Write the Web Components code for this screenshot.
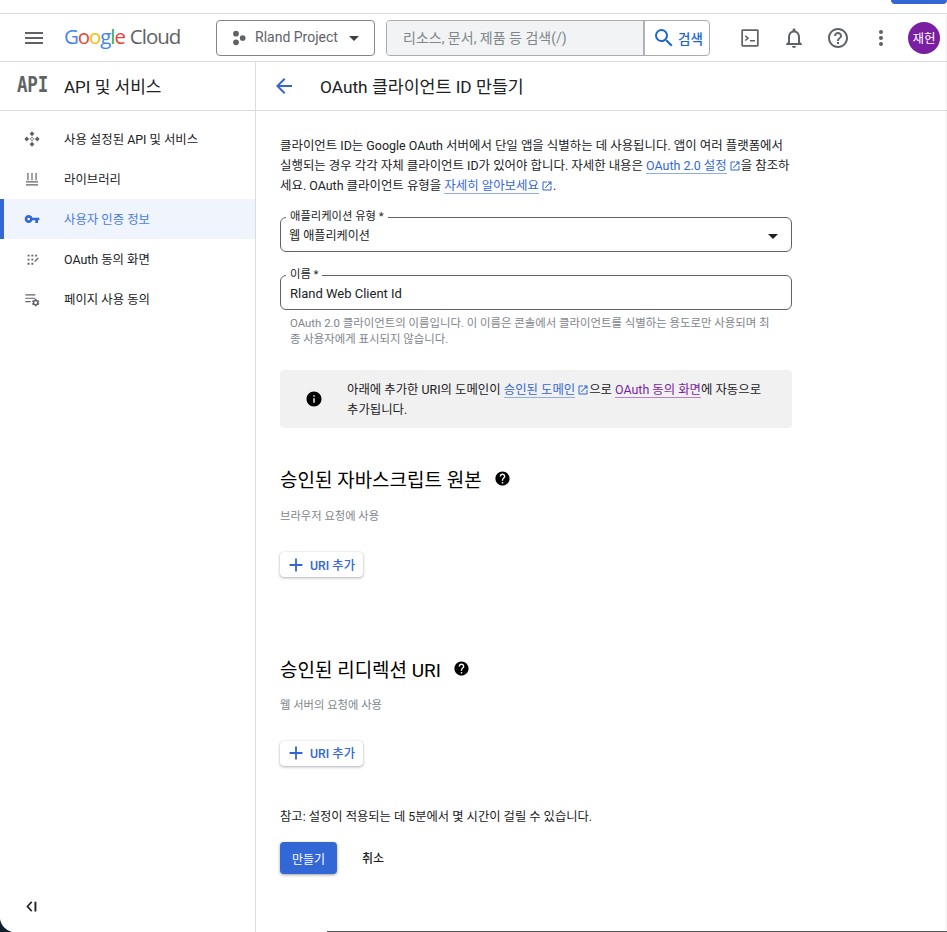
<!DOCTYPE html>
<html lang="ko">
<head>
<meta charset="utf-8">
<title>OAuth 클라이언트 ID 만들기</title>
<style>
  html, body { margin: 0; height: 100%; background: #fff; }
  body {
    font-family: Roboto, "Noto Sans CJK KR", sans-serif;
    color: #202124;
    overflow: hidden;
  }
</style>
</head>
<body>
<gc-console></gc-console>

<script>
const ICONS = {
  menu: `<path d="M3 18h18v-2H3v2zm0-5h18v-2H3v2zm0-7v2h18V6H3z"/>`,
  back: `<path d="M20 11H7.83l5.59-5.59L12 4l-8 8 8 8 1.41-1.41L7.83 13H20v-2z"/>`,
  search: `<path d="M15.5 14h-.79l-.28-.27A6.471 6.471 0 0 0 16 9.5 6.5 6.5 0 1 0 9.5 16c1.61 0 3.09-.59 4.23-1.57l.27.28v.79l5 4.99L20.49 19l-4.99-5zm-6 0C7.01 14 5 11.99 5 9.5S7.01 5 9.5 5 14 7.01 14 9.5 11.99 14 9.5 14z"/>`,
  bell: `<path d="M12 22c1.1 0 2-.9 2-2h-4c0 1.1.89 2 2 2zm6-6v-5c0-3.07-1.64-5.64-4.5-6.32V4c0-.83-.67-1.5-1.5-1.5s-1.5.67-1.5 1.5v.68C7.63 5.36 6 7.92 6 11v5l-2 2v1h16v-1l-2-2zm-2 1H8v-6c0-2.48 1.51-4.5 4-4.5s4 2.02 4 4.5v6z"/>`,
  helpOutline: `<path d="M11 18h2v-2h-2v2zm1-16C6.48 2 2 6.48 2 12s4.48 10 10 10 10-4.48 10-10S17.52 2 12 2zm0 18c-4.41 0-8-3.59-8-8s3.59-8 8-8 8 3.59 8 8-3.59 8-8 8zm0-14c-2.21 0-4 1.79-4 4h2c0-1.1.9-2 2-2s2 .9 2 2c0 2-3 1.75-3 5h2c0-2.25 3-2.5 3-5 0-2.21-1.79-4-4-4z"/>`,
  help: `<path d="M12 2C6.48 2 2 6.48 2 12s4.48 10 10 10 10-4.48 10-10S17.52 2 12 2zm1 17h-2v-2h2v2zm2.07-7.75l-.9.92C13.45 12.9 13 13.5 13 15h-2v-.5c0-1.1.45-2.1 1.17-2.83l1.24-1.26c.37-.36.59-.86.59-1.41 0-1.1-.9-2-2-2s-2 .9-2 2H8c0-2.21 1.79-4 4-4s4 1.79 4 4c0 .88-.36 1.68-.93 2.25z"/>`,
  info: `<path d="M12 2C6.48 2 2 6.48 2 12s4.48 10 10 10 10-4.48 10-10S17.52 2 12 2zm1 15h-2v-6h2v6zm0-8h-2V7h2v2z"/>`,
  more: `<path d="M12 8c1.1 0 2-.9 2-2s-.9-2-2-2-2 .9-2 2 .9 2 2 2zm0 2c-1.1 0-2 .9-2 2s.9 2 2 2 2-.9 2-2-.9-2-2-2zm0 6c-1.1 0-2 .9-2 2s.9 2 2 2 2-.9 2-2-.9-2-2-2z"/>`,
  key: `<path d="M12.65 10C11.83 7.67 9.61 6 7 6c-3.31 0-6 2.69-6 6s2.69 6 6 6c2.61 0 4.83-1.67 5.65-4H17v4h4v-4h2v-4H12.65zM7 14c-1.1 0-2-.9-2-2s.9-2 2-2 2 .9 2 2-.9 2-2 2z"/>`,
  open: `<path d="M19 19H5V5h7V3H5c-1.11 0-2 .9-2 2v14c0 1.1.89 2 2 2h14c1.1 0 2-.9 2-2v-7h-2v7zM14 3v2h3.59l-9.83 9.83 1.41 1.41L19 6.41V10h2V3h-7z"/>`,
  add: `<path d="M19 13h-6v6h-2v-6H5v-2h6V5h2v6h6v2z"/>`,
  terminal: `<path d="M4 2.5h16A1.5 1.5 0 0 1 21.5 4v16a1.5 1.5 0 0 1-1.5 1.5H4A1.5 1.5 0 0 1 2.5 20V4A1.5 1.5 0 0 1 4 2.5zm.4 1.9v15.2h15.2V4.4H4.4zM7.4 9l3.8 3.2-3.8 3.2-1.1-1.3 2.3-1.9-2.3-1.9L7.4 9zm4.6 5.1h5.5v1.6H12v-1.6z"/>`,
  project: `<circle cx="9" cy="5.5" r="4.3"/><circle cx="19" cy="12" r="4.3"/><circle cx="9" cy="18.5" r="4.3"/>`,
  apis: `<path d="M12 .5l3.6 3.6L12 7.7 8.4 4.1 12 .5zM4.1 8.4L7.7 12l-3.6 3.6L.5 12l3.6-3.6zm15.8 0L23.5 12l-3.6 3.6-3.6-3.6 3.6-3.6zM12 16.3l3.6 3.6-3.6 3.6-3.6-3.6 3.6-3.6z"/><circle cx="12" cy="9.8" r="1.2"/><circle cx="9.8" cy="12" r="1.2"/><circle cx="14.2" cy="12" r="1.2"/><circle cx="12" cy="14.2" r="1.2"/>`,
  library: `<path d="M3 20h18v1.8H3V20zm0-4.5h18v1.8H3v-1.8zM5 3h1.8v11H5V3zm6.100 0h1.800v11h-1.800V3zM17.200 3H19v11h-1.800V3z"/>`,
  consent: `<path d="M3 3h3.5v3.5H3V3zm7 0h3.5v3.5H10V3zm7 0h3.5v3.5H17V3zM3 10.5h3.5V14H3v-3.5zm7 0h3.5V14H10v-3.5zM3 18h3.5v3.5H3V18zm7 0h3.5v3.5H10V18zm6-3.5L22 8.5l1.5 1.5-6 6-2.3.8.8-2.3z"/>`,
  usage: `<path d="M2 5h15v1.7H2V5zm0 5h15v1.7H2V10zm0 5h8v1.7H2V15z"/><g transform="translate(10.5 10.5) scale(.58)"><path d="M19.14 12.94c.04-.3.06-.61.06-.94 0-.32-.02-.64-.07-.94l2.03-1.58a.49.49 0 0 0 .12-.61l-1.92-3.32a.488.488 0 0 0-.59-.22l-2.39.96c-.5-.38-1.03-.7-1.62-.94l-.36-2.54a.484.484 0 0 0-.48-.41h-3.84c-.24 0-.43.17-.47.41l-.36 2.54c-.59.24-1.13.57-1.62.94l-2.39-.96c-.22-.08-.47 0-.59.22L2.74 8.87c-.12.21-.08.47.12.61l2.03 1.58c-.05.3-.09.63-.09.94s.02.64.07.94l-2.03 1.58a.49.49 0 0 0-.12.61l1.92 3.32c.12.22.37.29.59.22l2.39-.96c.5.38 1.03.7 1.62.94l.36 2.54c.05.24.24.41.48.41h3.84c.24 0 .44-.17.47-.41l.36-2.54c.59-.24 1.13-.56 1.62-.94l2.39.96c.22.08.47 0 .59-.22l1.92-3.32c.12-.22.07-.47-.12-.61l-2.01-1.58zM12 15.6c-1.98 0-3.6-1.62-3.6-3.6s1.62-3.6 3.6-3.6 3.6 1.62 3.6 3.6-1.62 3.6-3.6 3.6z"/></g>`,
  collapse: `<path d="M13.5 4.5L6.5 12l7 7.5-2.2 2L2.5 12l8.8-9.5 2.2 2zM17.5 3H21v18h-3.5V3z"/>`,
  caret: `<path d="M7 10l5 5 5-5z"/>`
};

class GcIcon extends HTMLElement {
  connectedCallback() {
    const size = this.getAttribute("size") || 24;
    this.attachShadow({ mode: "open" }).innerHTML = `
      <style>
        :host { display: inline-flex; flex: none; width: ${size}px; height: ${size}px; color: inherit; }
        svg { display: block; width: 100%; height: 100%; fill: currentColor; }
      </style>
      <svg viewBox="0 0 24 24">${ICONS[this.getAttribute("name")]}</svg>`;
  }
}
customElements.define("gc-icon", GcIcon);

class GcLink extends HTMLElement {
  connectedCallback() {
    const external = this.hasAttribute("external");
    this.attachShadow({ mode: "open" }).innerHTML = `
      <style>
        :host { display: inline; color: var(--link, #3367d6); }
        .t { border-bottom: 1px solid var(--line, #93ade8); }
        gc-icon { vertical-align: -2px; margin-left: 2px; }
      </style>
      <span class="t"><slot></slot></span>${external ? `<gc-icon name="open" size="12"></gc-icon>` : ""}`;
  }
}
customElements.define("gc-link", GcLink);

class GcTopbar extends HTMLElement {
  connectedCallback() {
    this.attachShadow({ mode: "open" }).innerHTML = `
      <style>
        :host { display: flex; flex-direction: column; flex: none; }
        .strip { height: 13px; display: flex; justify-content: flex-end; }
        .tab { width: 56px; height: 3.5px; background: #3367d6; border-radius: 0 0 4px 4px; }
        .bar {
          height: 47px; display: flex; align-items: center;
          border-top: 1px solid #dadce0; border-bottom: 1px solid #dadce0;
          color: #5f6368;
        }
        .menu { margin-left: 22px; }
        .logo {
          margin-left: 18px; font: 400 20.5px/1 "Open Sans", sans-serif;
          letter-spacing: -1.1px; display: flex; width: 152px; white-space: nowrap; padding-bottom: 2px;
        }
        .logo .cloud { margin-left: 5px; color: #5f6368; letter-spacing: -1px; }
        .b { color: #4285f4; } .r { color: #ea4335; } .y { color: #fbbc04; } .g { color: #34a853; }
        .project {
          box-sizing: border-box; width: 159px; height: 36px; border: 1px solid #80868b; border-radius: 4px;
          display: flex; align-items: center; padding-left: 13px; font-size: 14px; color: #5f6368;
        }
        .project span { margin-left: 9px; margin-right: 4px; white-space: nowrap; padding-bottom: 2px; }
        .project gc-icon:last-child { color: #3c4043; }
        .search {
          box-sizing: border-box; width: 324px; height: 36px; margin-left: 11px;
          border: 1px solid #a8acb1; border-radius: 4px; display: flex; overflow: hidden;
        }
        .field {
          flex: 1; background: #f1f3f4; border-right: 2px solid #b0b3b8;
          display: flex; align-items: center; padding: 0 0 2px 16px;
          font-size: 14px; color: #80868b; white-space: nowrap;
        }
        .go {
          width: 64px; display: flex; align-items: center; justify-content: center; gap: 2px; padding-left: 1px; box-sizing: border-box;
          color: #1a67d2; font-size: 13.5px; font-weight: 500; white-space: nowrap;
        }
        .tools { display: flex; align-items: center; margin-left: 29px; }
        .avatar {
          width: 32px; height: 32px; border-radius: 50%; background: #7b1fa2; color: #fff;
          font-size: 12.5px; display: flex; align-items: center; justify-content: center; margin-left: 15px;
          white-space: nowrap;
        }
      </style>
      <div class="strip"><div class="tab"></div></div>
      <div class="bar">
        <gc-icon class="menu" name="menu" size="24"></gc-icon>
        <div class="logo"><span><span class="b">G</span><span class="r">o</span><span class="y">o</span><span class="b">g</span><span class="g">l</span><span class="r">e</span></span><span class="cloud">Cloud</span></div>
        <div class="project">
          <gc-icon name="project" size="16"></gc-icon>
          <span>Rland Project</span>
          <gc-icon name="caret" size="24"></gc-icon>
        </div>
        <div class="search">
          <div class="field">리소스, 문서, 제품 등 검색(/)</div>
          <div class="go"><gc-icon name="search" size="24"></gc-icon>검색</div>
        </div>
        <div class="tools">
          <gc-icon name="terminal" size="22"></gc-icon>
          <gc-icon name="bell" size="24" style="margin-left:21px"></gc-icon>
          <gc-icon name="helpOutline" size="24" style="margin-left:20px"></gc-icon>
          <gc-icon name="more" size="24" style="margin-left:19px"></gc-icon>
          <div class="avatar">재헌</div>
        </div>
      </div>`;
  }
}
customElements.define("gc-topbar", GcTopbar);

class GcNavItem extends HTMLElement {
  connectedCallback() {
    const active = this.hasAttribute("active");
    const size = this.getAttribute("size") || 16;
    this.attachShadow({ mode: "open" }).innerHTML = `
      <style>
        :host {
          display: flex; align-items: center; height: 40px; box-sizing: border-box;
          padding-left: ${active ? 20 : 24}px; font-size: 12.4px; white-space: nowrap;
          ${active ? "border-left: 4px solid #3367d6; background: #eff4fd; color: #4a7de0;" : "color: #202124;"}
        }
        gc-icon { color: ${active ? "#3367d6" : "#5f6368"}; margin: 0 ${24 + (16 - size) / 2}px 0 ${(16 - size) / 2}px; }
        span { padding-bottom: 1px; }
      </style>
      <gc-icon name="${this.getAttribute("icon")}" size="${size}"></gc-icon><span><slot></slot></span>`;
  }
}
customElements.define("gc-nav-item", GcNavItem);

class GcSidebar extends HTMLElement {
  connectedCallback() {
    this.attachShadow({ mode: "open" }).innerHTML = `
      <style>
        :host {
          display: flex; flex-direction: column; flex: none; width: 256px; box-sizing: border-box;
          border-right: 1px solid #dadce0;
        }
        .head {
          height: 49px; box-sizing: border-box; border-bottom: 1px solid #dadce0;
          display: flex; align-items: center; padding-left: 17px;
          font-size: 17px; white-space: nowrap;
        }
        .api {
          font: 700 17.5px/1 "DejaVu Sans Mono", monospace; color: #5f6368;
          width: 47px; letter-spacing: -.2px; transform: scaleY(1.2); transform-origin: 0 50%;
        }
        .title { padding-bottom: 2px; }
        nav { padding-top: 8px; display: flex; flex-direction: column; flex: 1; }
        .collapse { margin-top: auto; height: 13px; padding: 0 0 21px 25px; color: #202124; }
      </style>
      <div class="head"><span class="api">API</span><span class="title">API 및 서비스</span></div>
      <nav>
        <gc-nav-item icon="apis">사용 설정된 API 및 서비스</gc-nav-item>
        <gc-nav-item icon="library">라이브러리</gc-nav-item>
        <gc-nav-item icon="key" active>사용자 인증 정보</gc-nav-item>
        <gc-nav-item icon="consent" size="13">OAuth 동의 화면</gc-nav-item>
        <gc-nav-item icon="usage">페이지 사용 동의</gc-nav-item>
        <div class="collapse"><gc-icon name="collapse" size="13"></gc-icon></div>
      </nav>`;
  }
}
customElements.define("gc-sidebar", GcSidebar);

class GcField extends HTMLElement {
  connectedCallback() {
    const isSelect = this.hasAttribute("select");
    this.attachShadow({ mode: "open" }).innerHTML = `
      <style>
        :host { display: block; }
        fieldset {
          margin: 0; padding: 0 9px 0 9px; height: 41px; box-sizing: border-box;
          border: 1px solid #5f6368; border-radius: 6px; min-width: 0;
          display: flex; align-items: center; justify-content: space-between;
        }
        legend {
          padding: 0 4px; margin-left: -4px; font-size: 11.3px; line-height: 12px; color: #202124; white-space: nowrap;
        }
        .value { font-size: var(--value-size, 12.1px); color: #202124; white-space: nowrap; margin-top: ${isSelect ? -6 : -3}px; margin-left: ${isSelect ? -1 : 0}px; }
        gc-icon { color: #202124; margin-right: -3px; margin-top: -2px; }
      </style>
      <fieldset>
        <legend>${this.getAttribute("label")} *</legend>
        <span class="value"><slot></slot></span>
        ${isSelect ? `<gc-icon name="caret" size="24"></gc-icon>` : ""}
      </fieldset>`;
  }
}
customElements.define("gc-field", GcField);

class GcInfoBox extends HTMLElement {
  connectedCallback() {
    this.attachShadow({ mode: "open" }).innerHTML = `
      <style>
        :host {
          display: flex; align-items: center; box-sizing: border-box; height: 58px;
          background: #f1f1f1; border-radius: 4px; font-size: 12.4px; line-height: 20px; white-space: nowrap;
        }
        gc-icon { color: #000; margin: 0 24px 0 25px; }
        div { padding-top: 1px; }
      </style>
      <gc-icon name="info" size="18"></gc-icon>
      <div><slot></slot></div>`;
  }
}
customElements.define("gc-info-box", GcInfoBox);

class GcRaisedButton extends HTMLElement {
  connectedCallback() {
    this.attachShadow({ mode: "open" }).innerHTML = `
      <style>
        :host {
          display: inline-flex; align-items: center; box-sizing: border-box; height: 25px; width: 83px;
          padding-left: 5px; border-radius: 4px; background: #fff; color: #3367d6;
          font-size: 12.3px; font-weight: 500; white-space: nowrap;
          box-shadow: 0 1px 3px rgba(60,64,67,.4), 0 0 1px rgba(60,64,67,.2);
        }
        gc-icon { margin-right: 3px; }
      </style>
      <gc-icon name="add" size="22"></gc-icon><slot></slot>`;
  }
}
customElements.define("gc-raised-button", GcRaisedButton);

class GcUriSection extends HTMLElement {
  connectedCallback() {
    this.attachShadow({ mode: "open" }).innerHTML = `
      <style>
        :host { display: block; }
        h2 {
          margin: 0; height: 24px; display: flex; align-items: center;
          font-size: 19px; font-weight: 400; color: #000; white-space: nowrap;
        }
        gc-icon { color: #000; margin-left: 12px; }
        p { margin: 0; height: 16px; padding-top: var(--note-gap, 18px); font-size: 11.3px; line-height: 16px; color: #80868b; white-space: nowrap; }
        gc-raised-button { margin-top: var(--button-gap, 28px); }
      </style>
      <h2>${this.getAttribute("heading")}<gc-icon name="help" size="17"></gc-icon></h2>
      <p>${this.getAttribute("note")}</p>
      <gc-raised-button>URI 추가</gc-raised-button>`;
  }
}
customElements.define("gc-uri-section", GcUriSection);

class GcForm extends HTMLElement {
  connectedCallback() {
    this.attachShadow({ mode: "open" }).innerHTML = `
      <style>
        :host { display: block; padding: 25px 0 0 24px; width: 512px; font-size: 12.45px; color: #202124; }
        .intro { margin: 0; line-height: 20px; white-space: nowrap; }
        gc-field.type { margin-top: 15px; }
        gc-field.name { margin-top: 17px; --value-size: 13px; }
        .hint { margin: 5px 0 0; padding-left: 10px; font-size: 11.4px; line-height: 16px; color: #80868b; white-space: nowrap; }
        gc-info-box { margin-top: 23px; }
        gc-uri-section.js { margin-top: 38px; --note-gap: 19px; --button-gap: 27px; }
        gc-uri-section.redirect { margin-top: 78px; --note-gap: 17px; --button-gap: 27px; }
        .note { margin: 42px 0 0; font-size: 12.3px; line-height: 16px; white-space: nowrap; }
        .actions { display: flex; align-items: center; margin-top: 17px; }
        .create {
          width: 57px; height: 32px; border-radius: 4px; background: #3367d6; color: #fff;
          display: flex; align-items: center; justify-content: center; font-size: 12px; white-space: nowrap;
          box-shadow: 0 1px 3px rgba(60,64,67,.5);
        }
        .cancel { margin-left: 25px; font-weight: 500; white-space: nowrap; font-size: 12px; padding-bottom: 2px; }
      </style>
      <p class="intro">클라이언트 ID는 Google OAuth 서버에서 단일 앱을 식별하는 데 사용됩니다. 앱이 여러 플랫폼에서<br>실행되는 경우 각각 자체 클라이언트 ID가 있어야 합니다. 자세한 내용은 <gc-link external>OAuth 2.0 설정</gc-link>을 참조하<br>세요. OAuth 클라이언트 유형을 <gc-link external>자세히 알아보세요</gc-link>.</p>
      <gc-field class="type" select label="애플리케이션 유형">웹 애플리케이션</gc-field>
      <gc-field class="name" label="이름">Rland Web Client Id</gc-field>
      <p class="hint">OAuth 2.0 클라이언트의 이름입니다. 이 이름은 콘솔에서 클라이언트를 식별하는 용도로만 사용되며 최<br>종 사용자에게 표시되지 않습니다.</p>
      <gc-info-box>아래에 추가한 URI의 도메인이 <gc-link external>승인된 도메인</gc-link>으로 <gc-link style="--link:#7b1fa2;--line:#b583c9">OAuth 동의 화면</gc-link>에 자동으로<br>추가됩니다.</gc-info-box>
      <gc-uri-section class="js" heading="승인된 자바스크립트 원본" note="브라우저 요청에 사용"></gc-uri-section>
      <gc-uri-section class="redirect" heading="승인된 리디렉션 URI" note="웹 서버의 요청에 사용"></gc-uri-section>
      <p class="note">참고: 설정이 적용되는 데 5분에서 몇 시간이 걸릴 수 있습니다.</p>
      <div class="actions"><div class="create">만들기</div><div class="cancel">취소</div></div>`;
  }
}
customElements.define("gc-form", GcForm);

class GcMain extends HTMLElement {
  connectedCallback() {
    this.attachShadow({ mode: "open" }).innerHTML = `
      <style>
        :host { display: flex; flex-direction: column; flex: 1; min-width: 0; }
        .head {
          height: 49px; box-sizing: border-box; border-bottom: 1px solid #dadce0; flex: none;
          display: flex; align-items: center; padding-left: 16px; font-size: 17.3px; white-space: nowrap;
        }
        .title { padding-bottom: 2px; }
        gc-icon { color: #3367d6; margin-right: 24px; }
      </style>
      <div class="head"><gc-icon name="back" size="24"></gc-icon><span class="title">OAuth 클라이언트 ID 만들기</span></div>
      <gc-form></gc-form>`;
  }
}
customElements.define("gc-main", GcMain);

class GcConsole extends HTMLElement {
  connectedCallback() {
    this.attachShadow({ mode: "open" }).innerHTML = `
      <style>
        :host { display: flex; flex-direction: column; height: 932px; position: relative; overflow: hidden; }
        .body { display: flex; flex: 1; min-height: 0; }
        /* window edges of the captured desktop, they lie over the page */
        .edge { position: absolute; right: 0; top: 14px; bottom: 0; width: 3px; background: linear-gradient(90deg, rgba(0,0,0,0), rgba(0,0,0,.05)); }
        .floor { position: absolute; left: 327px; right: 0; bottom: 0; height: 1px; background: #555; }
        .corner { position: absolute; left: 0; bottom: 0; width: 12px; height: 13px; }
      </style>
      <gc-topbar></gc-topbar>
      <div class="body"><gc-sidebar></gc-sidebar><gc-main></gc-main></div>
      <div class="edge"></div>
      <div class="floor"></div>
      <svg class="corner" viewBox="0 0 12 13"><path d="M0 0C1 6 5 11 12 13H0z" fill="#10202c"/></svg>`;
  }
}
customElements.define("gc-console", GcConsole);
</script>
</body>
</html>
